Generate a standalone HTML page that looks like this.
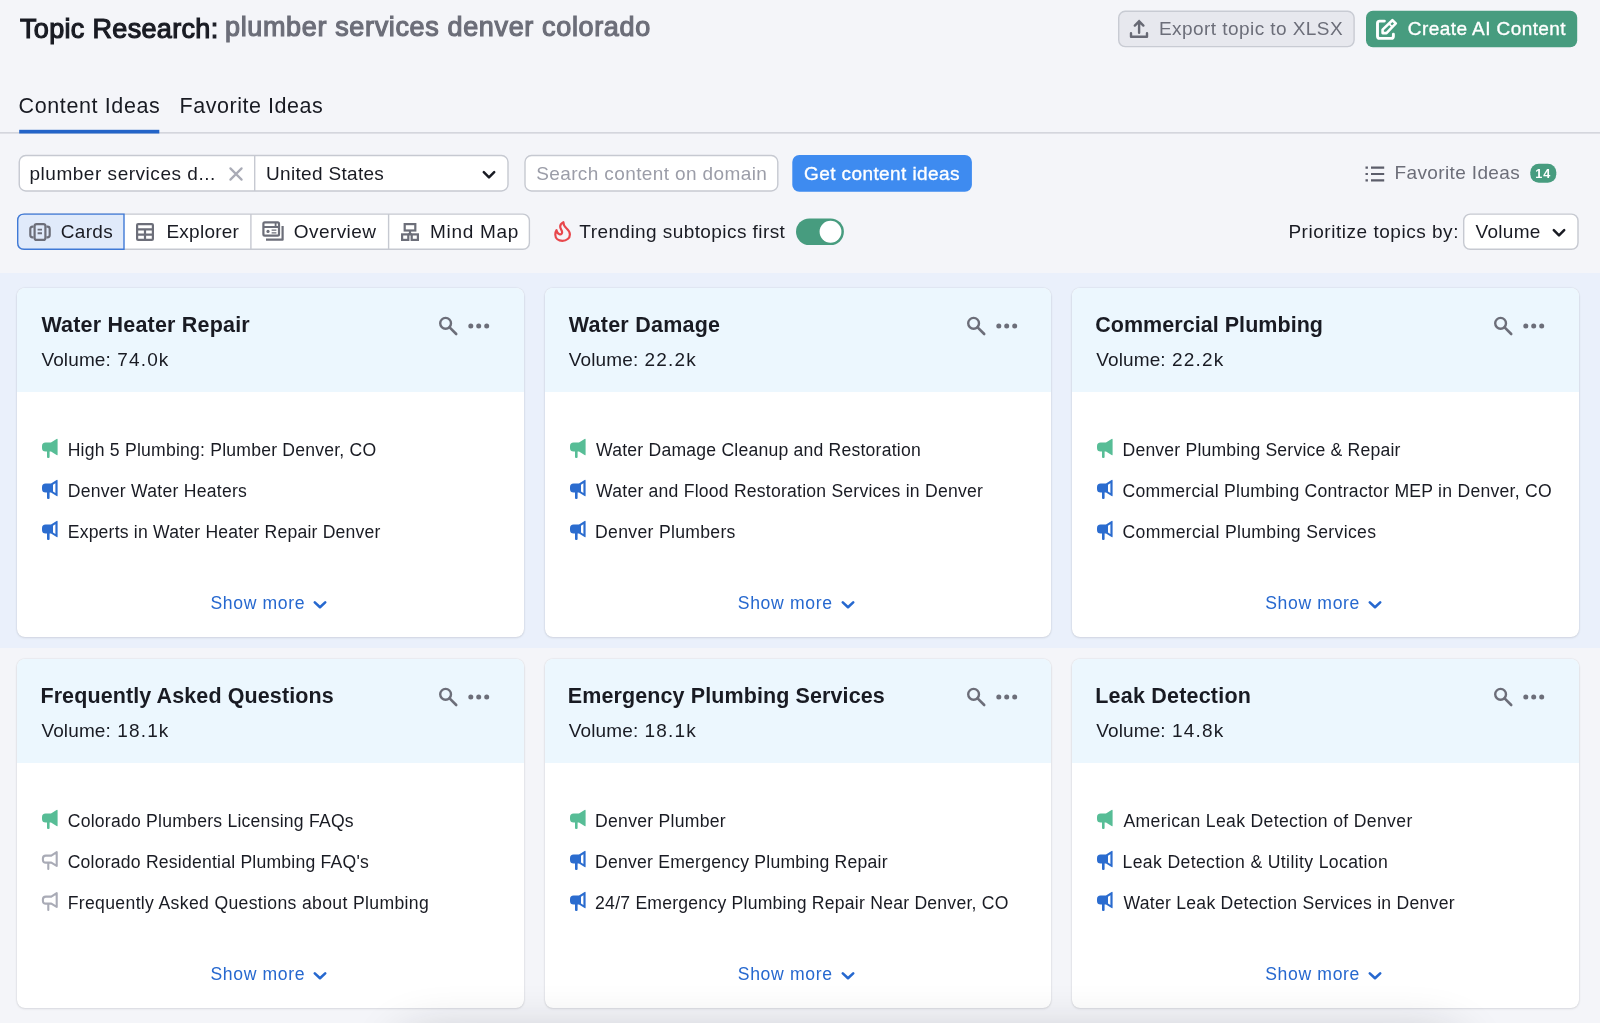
<!DOCTYPE html>
<html lang="en">
<head>
<meta charset="utf-8">
<title>Topic Research: plumber services denver colorado</title>
<style>
*{box-sizing:border-box;margin:0;padding:0}
html,body{width:1600px;height:1023px;overflow:hidden}
body{background:#f4f5f9;font-family:"Liberation Sans",Arial,sans-serif;color:#191b23;position:relative}
.t{position:absolute;white-space:pre;line-height:1}
svg{position:absolute;overflow:visible}
.a{position:absolute}
/* cards */
#band{left:0;top:273px;width:1600px;height:375px;background:#eaf0fb}
.card{position:absolute;width:506.4px;height:349.5px;background:#fff;border-radius:8px;box-shadow:0 0 1.5px rgba(25,27,35,.17),0 1px 2.5px rgba(25,27,35,.09);overflow:hidden}
.card .hd{position:absolute;left:0;top:0;width:100%;height:104.5px;background:#ecf7fe}
#txt{position:absolute;left:0;top:0;width:1600px;height:1023px;will-change:transform}
#btmshade{left:410px;top:1050px;width:1040px;height:40px;border-radius:20px;box-shadow:0 0 50px 14px rgba(25,27,35,.24);pointer-events:none}
</style>
</head>
<body>
<svg id="chrome" viewBox="0 0 1600 270" width="1600" height="270" style="left:0;top:0">
<rect x="0" y="132.1" width="1600" height="1.5" fill="#d1d3da"/>
<rect x="19.2" y="129.8" width="140.1" height="3.7" fill="#2364c8"/>
<rect x="1118.7" y="11.3" width="235.4" height="35.3" rx="6.5" fill="#e7e8ee" stroke="#c8cbd3" stroke-width="1.4"/>
<rect x="1366" y="10.7" width="211.2" height="36.6" rx="7" fill="#479c7f"/>
<rect x="19.25" y="155.5" width="488.75" height="35.5" rx="6.5" fill="#fff" stroke="#c6c9d1" stroke-width="1.4"/>
<path d="M254.7 155.5 V191" stroke="#c6c9d1" stroke-width="1.4"/>
<rect x="525" y="155.5" width="252.8" height="35.5" rx="6.5" fill="#fff" stroke="#c6c9d1" stroke-width="1.4"/>
<rect x="792.3" y="155" width="179.6" height="36.8" rx="7" fill="#3e8bf0"/>
<rect x="1530.3" y="163.8" width="26" height="19" rx="8.5" fill="#479c7f"/>
<rect x="17.7" y="214.1" width="511.7" height="35.2" rx="6.5" fill="#fff" stroke="#c6c9d1" stroke-width="1.4"/>
<path d="M250.9 214.1 V249.3 M388.6 214.1 V249.3" stroke="#c6c9d1" stroke-width="1.4"/>
<path d="M124 214.1 H24.2 Q17.7 214.1 17.7 220.6 V242.8 Q17.7 249.3 24.2 249.3 H124 Z" fill="#e0eafa" stroke="#3f79d6" stroke-width="1.4"/>
<rect x="796" y="218.4" width="47.9" height="26.7" rx="13.35" fill="#479c7f"/>
<circle cx="830.5" cy="231.75" r="10.9" fill="#fff"/>
<rect x="1463.7" y="214.1" width="114.3" height="35.2" rx="6.5" fill="#fff" stroke="#c6c9d1" stroke-width="1.4"/>
<g fill="none" stroke="#676974" stroke-width="2.4" stroke-linecap="round">
<path d="M1139.1 32.8 V22 M1134.8 25.6 L1139.1 21.3 L1143.4 25.6" stroke-linejoin="miter"/>
<path d="M1131 33.3 V36.7 H1147 V33.3" stroke-linejoin="round"/>
</g>
<g fill="none" stroke="#fff" stroke-linecap="round" stroke-linejoin="round">
<path d="M1384.4 21.1 H1379.7 Q1377.5 21.1 1377.5 23.3 V36.2 Q1377.5 38.4 1379.7 38.4 H1391.2 Q1393.4 38.4 1393.4 36.2 V34.2" stroke-width="2.9"/>
<path d="M1382.6 29.6 L1392.4 20.2 L1395.8 23.4 L1386.5 33.1 H1382.6 Z" stroke-width="2.6"/>
<path d="M1388.9 23.7 L1392 26.7" stroke-width="1.8" stroke-linecap="butt"/>
</g>
</svg>
<div class="a" id="band"></div>

<!-- clear X -->
<svg viewBox="0 0 14 14" width="14" height="14" style="left:229px;top:166.7px"><path d="M1.4 1.4 L12.6 12.6 M12.6 1.4 L1.4 12.6" stroke="#a9abb6" stroke-width="2.2" stroke-linecap="round"/></svg>
<!-- select chevron -->
<svg viewBox="0 0 14 10" width="14" height="10" style="left:481.5px;top:170px"><path d="M1.8 2.2 L7 7.4 L12.2 2.2" fill="none" stroke="#191b23" stroke-width="2.5" stroke-linecap="round" stroke-linejoin="round"/></svg>
<!-- volume chevron -->
<svg viewBox="0 0 14 10" width="14" height="10" style="left:1552.3px;top:228.3px"><path d="M1.8 2.2 L7 7.4 L12.2 2.2" fill="none" stroke="#191b23" stroke-width="2.5" stroke-linecap="round" stroke-linejoin="round"/></svg>
<!-- list icon -->
<svg viewBox="0 0 20 16" width="20" height="16" style="left:1365px;top:165.6px"><path d="M6 1.6 H19.2 M6 8 H19.2 M6 14.4 H19.2" stroke="#5c5e6b" stroke-width="2.2"/><path d="M0.5 1.6 H2.9 M0.5 8 H2.9 M0.5 14.4 H2.9" stroke="#5c5e6b" stroke-width="2.2"/></svg>
<!-- cards icon -->
<svg viewBox="0 0 22 18" width="22" height="18" style="left:28.5px;top:223px"><rect x="5.6" y="1.1" width="10.8" height="15.8" rx="2" fill="none" stroke="#6c6e79" stroke-width="2.2"/><path d="M4.6 3.7 H3.6 Q1.3 3.7 1.3 6 V12 Q1.3 14.3 3.6 14.3 H4.6 M17.4 3.7 H18.4 Q20.7 3.7 20.7 6 V12 Q20.7 14.3 18.4 14.3 H17.4" fill="none" stroke="#6c6e79" stroke-width="2.2"/><path d="M8.6 6.6 H13 M8.6 10.2 H13" stroke="#6c6e79" stroke-width="1.9"/></svg>
<!-- explorer (table) icon -->
<svg viewBox="0 0 18 18" width="18" height="18" style="left:136.2px;top:223px"><rect x="1.1" y="1.1" width="15.8" height="15.8" rx="1" fill="none" stroke="#6c6e79" stroke-width="2.2"/><path d="M1 6.3 H17 M1 11.7 H17 M9 6.3 V17" stroke="#6c6e79" stroke-width="2.2" fill="none"/></svg>
<!-- overview icon -->
<svg viewBox="0 0 22 20" width="22" height="20" style="left:261.8px;top:221px"><rect x="1.4" y="1.3" width="15.6" height="13.4" rx="1.4" fill="none" stroke="#6c6e79" stroke-width="2.2"/><path d="M1.4 6 H17 M13.6 2 V5.4" stroke="#6c6e79" stroke-width="1.8"/><circle cx="6" cy="10.4" r="1.6" fill="#6c6e79"/><path d="M9.6 9.2 H14.4 M9.6 11.8 H14.4" stroke="#6c6e79" stroke-width="1.3"/><path d="M20.6 5 V18.7 H4" fill="none" stroke="#6c6e79" stroke-width="2.2" stroke-linejoin="round"/></svg>
<!-- mind map icon -->
<svg viewBox="0 0 18 18" width="18" height="18" style="left:401px;top:223px"><rect x="3.7" y="1.1" width="10.6" height="6.4" fill="none" stroke="#6c6e79" stroke-width="2.2"/><path d="M9 7.5 V11.2" stroke="#6c6e79" stroke-width="2.2"/><rect x="1.1" y="11.4" width="6.2" height="5.5" fill="none" stroke="#6c6e79" stroke-width="2.2"/><rect x="10.7" y="11.4" width="6.2" height="5.5" fill="none" stroke="#6c6e79" stroke-width="2.2"/><path d="M7 11.4 H11" stroke="#6c6e79" stroke-width="2.2"/></svg>
<!-- flame icon -->
<svg viewBox="0 0 30 30" width="30" height="30" style="left:548px;top:216px"><path d="M15.4 6.2 C15.2 8.8 16.6 10.6 18.4 12.2 C20.4 14 21.9 15.8 21.9 18.4 C21.9 22.2 18.6 24.8 14.4 24.8 C10.4 24.8 7.3 22.4 7.3 18.8 C7.3 17 7.7 15.4 8.5 14.2 C8.9 16 9.8 17.6 11.4 18.2 C13.2 18.8 14.6 17.4 14 15.4 C13.6 14 12.4 12.6 12.2 10.8 C12 8.8 13.4 7.2 15.4 6.2 Z" fill="none" stroke="#e8474c" stroke-width="2.2" stroke-linejoin="round"/></svg>

<div class="card" style="left:17.4px;top:287.5px"><div class="hd"></div></div>
<svg class="ic" viewBox="0 0 60 24" width="60" height="24" style="left:434.4px;top:314.0px"><circle cx="11.6" cy="9.3" r="5.4" fill="none" stroke="#6c6e79" stroke-width="2.4"/><path d="M15.6 13.4 L22.2 20" stroke="#6c6e79" stroke-width="2.6" stroke-linecap="round"/><circle cx="36.8" cy="11.9" r="2.5" fill="#6c6e79"/><circle cx="44.7" cy="11.9" r="2.5" fill="#6c6e79"/><circle cx="52.7" cy="11.9" r="2.5" fill="#6c6e79"/></svg>
<svg class="mg" viewBox="0 0 18 20" width="18" height="20" style="left:41.3px;top:438.2px"><path d="M1 8.2 Q1 4.6 4.6 4.6 H10 L15.6 0.9 Q16.6 0.4 16.6 1.6 V16.4 Q16.6 17.6 15.6 17.1 L10 13.6 H8.6 V19 Q8.6 20 7.6 20 H7 Q6 20 6 19 V13.6 H4.6 Q1 13.6 1 10 Z" fill="#57bd96"/></svg>
<svg class="mg" viewBox="0 0 18 20" width="18" height="20" style="left:41.3px;top:479.2px"><path fill-rule="evenodd" d="M1 8.2 Q1 4.6 4.6 4.6 H10 L15.6 0.9 Q16.6 0.4 16.6 1.6 V16.4 Q16.6 17.6 15.6 17.1 L10 13.6 H8.6 V19 Q8.6 20 7.6 20 H7 Q6 20 6 19 V13.6 H4.6 Q1 13.6 1 10 Z M12 5.8 L14.4 4.2 V13.9 L12 12.4 Z" fill="#2b6ccf"/></svg>
<svg class="mg" viewBox="0 0 18 20" width="18" height="20" style="left:41.3px;top:520.2px"><path fill-rule="evenodd" d="M1 8.2 Q1 4.6 4.6 4.6 H10 L15.6 0.9 Q16.6 0.4 16.6 1.6 V16.4 Q16.6 17.6 15.6 17.1 L10 13.6 H8.6 V19 Q8.6 20 7.6 20 H7 Q6 20 6 19 V13.6 H4.6 Q1 13.6 1 10 Z M12 5.8 L14.4 4.2 V13.9 L12 12.4 Z" fill="#2b6ccf"/></svg>
<svg class="ic" viewBox="0 0 16 12" width="16" height="12" style="left:312.4px;top:598.5px"><path d="M2.8 3.4 L8 8.2 L13.2 3.4" fill="none" stroke="#2668cf" stroke-width="2.6" stroke-linecap="round" stroke-linejoin="round"/></svg>
<div class="card" style="left:544.8px;top:287.5px"><div class="hd"></div></div>
<svg class="ic" viewBox="0 0 60 24" width="60" height="24" style="left:961.8px;top:314.0px"><circle cx="11.6" cy="9.3" r="5.4" fill="none" stroke="#6c6e79" stroke-width="2.4"/><path d="M15.6 13.4 L22.2 20" stroke="#6c6e79" stroke-width="2.6" stroke-linecap="round"/><circle cx="36.8" cy="11.9" r="2.5" fill="#6c6e79"/><circle cx="44.7" cy="11.9" r="2.5" fill="#6c6e79"/><circle cx="52.7" cy="11.9" r="2.5" fill="#6c6e79"/></svg>
<svg class="mg" viewBox="0 0 18 20" width="18" height="20" style="left:568.7px;top:438.2px"><path d="M1 8.2 Q1 4.6 4.6 4.6 H10 L15.6 0.9 Q16.6 0.4 16.6 1.6 V16.4 Q16.6 17.6 15.6 17.1 L10 13.6 H8.6 V19 Q8.6 20 7.6 20 H7 Q6 20 6 19 V13.6 H4.6 Q1 13.6 1 10 Z" fill="#57bd96"/></svg>
<svg class="mg" viewBox="0 0 18 20" width="18" height="20" style="left:568.7px;top:479.2px"><path fill-rule="evenodd" d="M1 8.2 Q1 4.6 4.6 4.6 H10 L15.6 0.9 Q16.6 0.4 16.6 1.6 V16.4 Q16.6 17.6 15.6 17.1 L10 13.6 H8.6 V19 Q8.6 20 7.6 20 H7 Q6 20 6 19 V13.6 H4.6 Q1 13.6 1 10 Z M12 5.8 L14.4 4.2 V13.9 L12 12.4 Z" fill="#2b6ccf"/></svg>
<svg class="mg" viewBox="0 0 18 20" width="18" height="20" style="left:568.7px;top:520.2px"><path fill-rule="evenodd" d="M1 8.2 Q1 4.6 4.6 4.6 H10 L15.6 0.9 Q16.6 0.4 16.6 1.6 V16.4 Q16.6 17.6 15.6 17.1 L10 13.6 H8.6 V19 Q8.6 20 7.6 20 H7 Q6 20 6 19 V13.6 H4.6 Q1 13.6 1 10 Z M12 5.8 L14.4 4.2 V13.9 L12 12.4 Z" fill="#2b6ccf"/></svg>
<svg class="ic" viewBox="0 0 16 12" width="16" height="12" style="left:839.8px;top:598.5px"><path d="M2.8 3.4 L8 8.2 L13.2 3.4" fill="none" stroke="#2668cf" stroke-width="2.6" stroke-linecap="round" stroke-linejoin="round"/></svg>
<div class="card" style="left:1072.2px;top:287.5px"><div class="hd"></div></div>
<svg class="ic" viewBox="0 0 60 24" width="60" height="24" style="left:1489.2px;top:314.0px"><circle cx="11.6" cy="9.3" r="5.4" fill="none" stroke="#6c6e79" stroke-width="2.4"/><path d="M15.6 13.4 L22.2 20" stroke="#6c6e79" stroke-width="2.6" stroke-linecap="round"/><circle cx="36.8" cy="11.9" r="2.5" fill="#6c6e79"/><circle cx="44.7" cy="11.9" r="2.5" fill="#6c6e79"/><circle cx="52.7" cy="11.9" r="2.5" fill="#6c6e79"/></svg>
<svg class="mg" viewBox="0 0 18 20" width="18" height="20" style="left:1096.1px;top:438.2px"><path d="M1 8.2 Q1 4.6 4.6 4.6 H10 L15.6 0.9 Q16.6 0.4 16.6 1.6 V16.4 Q16.6 17.6 15.6 17.1 L10 13.6 H8.6 V19 Q8.6 20 7.6 20 H7 Q6 20 6 19 V13.6 H4.6 Q1 13.6 1 10 Z" fill="#57bd96"/></svg>
<svg class="mg" viewBox="0 0 18 20" width="18" height="20" style="left:1096.1px;top:479.2px"><path fill-rule="evenodd" d="M1 8.2 Q1 4.6 4.6 4.6 H10 L15.6 0.9 Q16.6 0.4 16.6 1.6 V16.4 Q16.6 17.6 15.6 17.1 L10 13.6 H8.6 V19 Q8.6 20 7.6 20 H7 Q6 20 6 19 V13.6 H4.6 Q1 13.6 1 10 Z M12 5.8 L14.4 4.2 V13.9 L12 12.4 Z" fill="#2b6ccf"/></svg>
<svg class="mg" viewBox="0 0 18 20" width="18" height="20" style="left:1096.1px;top:520.2px"><path fill-rule="evenodd" d="M1 8.2 Q1 4.6 4.6 4.6 H10 L15.6 0.9 Q16.6 0.4 16.6 1.6 V16.4 Q16.6 17.6 15.6 17.1 L10 13.6 H8.6 V19 Q8.6 20 7.6 20 H7 Q6 20 6 19 V13.6 H4.6 Q1 13.6 1 10 Z M12 5.8 L14.4 4.2 V13.9 L12 12.4 Z" fill="#2b6ccf"/></svg>
<svg class="ic" viewBox="0 0 16 12" width="16" height="12" style="left:1367.2px;top:598.5px"><path d="M2.8 3.4 L8 8.2 L13.2 3.4" fill="none" stroke="#2668cf" stroke-width="2.6" stroke-linecap="round" stroke-linejoin="round"/></svg>
<div class="card" style="left:17.4px;top:658.5px"><div class="hd"></div></div>
<svg class="ic" viewBox="0 0 60 24" width="60" height="24" style="left:434.4px;top:685.0px"><circle cx="11.6" cy="9.3" r="5.4" fill="none" stroke="#6c6e79" stroke-width="2.4"/><path d="M15.6 13.4 L22.2 20" stroke="#6c6e79" stroke-width="2.6" stroke-linecap="round"/><circle cx="36.8" cy="11.9" r="2.5" fill="#6c6e79"/><circle cx="44.7" cy="11.9" r="2.5" fill="#6c6e79"/><circle cx="52.7" cy="11.9" r="2.5" fill="#6c6e79"/></svg>
<svg class="mg" viewBox="0 0 18 20" width="18" height="20" style="left:41.3px;top:809.2px"><path d="M1 8.2 Q1 4.6 4.6 4.6 H10 L15.6 0.9 Q16.6 0.4 16.6 1.6 V16.4 Q16.6 17.6 15.6 17.1 L10 13.6 H8.6 V19 Q8.6 20 7.6 20 H7 Q6 20 6 19 V13.6 H4.6 Q1 13.6 1 10 Z" fill="#57bd96"/></svg>
<svg class="mg" viewBox="0 0 18 20" width="18" height="20" style="left:41.3px;top:850.2px"><path d="M1.9 8.4 Q1.9 5.6 4.8 5.6 H10.3 L15.7 2.1 V15.9 L10.3 12.6 H4.8 Q1.9 12.6 1.9 9.8 Z M7.3 13 V19" fill="none" stroke="#a9abb6" stroke-width="2.1" stroke-linejoin="round" stroke-linecap="round"/></svg>
<svg class="mg" viewBox="0 0 18 20" width="18" height="20" style="left:41.3px;top:891.2px"><path d="M1.9 8.4 Q1.9 5.6 4.8 5.6 H10.3 L15.7 2.1 V15.9 L10.3 12.6 H4.8 Q1.9 12.6 1.9 9.8 Z M7.3 13 V19" fill="none" stroke="#a9abb6" stroke-width="2.1" stroke-linejoin="round" stroke-linecap="round"/></svg>
<svg class="ic" viewBox="0 0 16 12" width="16" height="12" style="left:312.4px;top:969.5px"><path d="M2.8 3.4 L8 8.2 L13.2 3.4" fill="none" stroke="#2668cf" stroke-width="2.6" stroke-linecap="round" stroke-linejoin="round"/></svg>
<div class="card" style="left:544.8px;top:658.5px"><div class="hd"></div></div>
<svg class="ic" viewBox="0 0 60 24" width="60" height="24" style="left:961.8px;top:685.0px"><circle cx="11.6" cy="9.3" r="5.4" fill="none" stroke="#6c6e79" stroke-width="2.4"/><path d="M15.6 13.4 L22.2 20" stroke="#6c6e79" stroke-width="2.6" stroke-linecap="round"/><circle cx="36.8" cy="11.9" r="2.5" fill="#6c6e79"/><circle cx="44.7" cy="11.9" r="2.5" fill="#6c6e79"/><circle cx="52.7" cy="11.9" r="2.5" fill="#6c6e79"/></svg>
<svg class="mg" viewBox="0 0 18 20" width="18" height="20" style="left:568.7px;top:809.2px"><path d="M1 8.2 Q1 4.6 4.6 4.6 H10 L15.6 0.9 Q16.6 0.4 16.6 1.6 V16.4 Q16.6 17.6 15.6 17.1 L10 13.6 H8.6 V19 Q8.6 20 7.6 20 H7 Q6 20 6 19 V13.6 H4.6 Q1 13.6 1 10 Z" fill="#57bd96"/></svg>
<svg class="mg" viewBox="0 0 18 20" width="18" height="20" style="left:568.7px;top:850.2px"><path fill-rule="evenodd" d="M1 8.2 Q1 4.6 4.6 4.6 H10 L15.6 0.9 Q16.6 0.4 16.6 1.6 V16.4 Q16.6 17.6 15.6 17.1 L10 13.6 H8.6 V19 Q8.6 20 7.6 20 H7 Q6 20 6 19 V13.6 H4.6 Q1 13.6 1 10 Z M12 5.8 L14.4 4.2 V13.9 L12 12.4 Z" fill="#2b6ccf"/></svg>
<svg class="mg" viewBox="0 0 18 20" width="18" height="20" style="left:568.7px;top:891.2px"><path fill-rule="evenodd" d="M1 8.2 Q1 4.6 4.6 4.6 H10 L15.6 0.9 Q16.6 0.4 16.6 1.6 V16.4 Q16.6 17.6 15.6 17.1 L10 13.6 H8.6 V19 Q8.6 20 7.6 20 H7 Q6 20 6 19 V13.6 H4.6 Q1 13.6 1 10 Z M12 5.8 L14.4 4.2 V13.9 L12 12.4 Z" fill="#2b6ccf"/></svg>
<svg class="ic" viewBox="0 0 16 12" width="16" height="12" style="left:839.8px;top:969.5px"><path d="M2.8 3.4 L8 8.2 L13.2 3.4" fill="none" stroke="#2668cf" stroke-width="2.6" stroke-linecap="round" stroke-linejoin="round"/></svg>
<div class="card" style="left:1072.2px;top:658.5px"><div class="hd"></div></div>
<svg class="ic" viewBox="0 0 60 24" width="60" height="24" style="left:1489.2px;top:685.0px"><circle cx="11.6" cy="9.3" r="5.4" fill="none" stroke="#6c6e79" stroke-width="2.4"/><path d="M15.6 13.4 L22.2 20" stroke="#6c6e79" stroke-width="2.6" stroke-linecap="round"/><circle cx="36.8" cy="11.9" r="2.5" fill="#6c6e79"/><circle cx="44.7" cy="11.9" r="2.5" fill="#6c6e79"/><circle cx="52.7" cy="11.9" r="2.5" fill="#6c6e79"/></svg>
<svg class="mg" viewBox="0 0 18 20" width="18" height="20" style="left:1096.1px;top:809.2px"><path d="M1 8.2 Q1 4.6 4.6 4.6 H10 L15.6 0.9 Q16.6 0.4 16.6 1.6 V16.4 Q16.6 17.6 15.6 17.1 L10 13.6 H8.6 V19 Q8.6 20 7.6 20 H7 Q6 20 6 19 V13.6 H4.6 Q1 13.6 1 10 Z" fill="#57bd96"/></svg>
<svg class="mg" viewBox="0 0 18 20" width="18" height="20" style="left:1096.1px;top:850.2px"><path fill-rule="evenodd" d="M1 8.2 Q1 4.6 4.6 4.6 H10 L15.6 0.9 Q16.6 0.4 16.6 1.6 V16.4 Q16.6 17.6 15.6 17.1 L10 13.6 H8.6 V19 Q8.6 20 7.6 20 H7 Q6 20 6 19 V13.6 H4.6 Q1 13.6 1 10 Z M12 5.8 L14.4 4.2 V13.9 L12 12.4 Z" fill="#2b6ccf"/></svg>
<svg class="mg" viewBox="0 0 18 20" width="18" height="20" style="left:1096.1px;top:891.2px"><path fill-rule="evenodd" d="M1 8.2 Q1 4.6 4.6 4.6 H10 L15.6 0.9 Q16.6 0.4 16.6 1.6 V16.4 Q16.6 17.6 15.6 17.1 L10 13.6 H8.6 V19 Q8.6 20 7.6 20 H7 Q6 20 6 19 V13.6 H4.6 Q1 13.6 1 10 Z M12 5.8 L14.4 4.2 V13.9 L12 12.4 Z" fill="#2b6ccf"/></svg>
<svg class="ic" viewBox="0 0 16 12" width="16" height="12" style="left:1367.2px;top:969.5px"><path d="M2.8 3.4 L8 8.2 L13.2 3.4" fill="none" stroke="#2668cf" stroke-width="2.6" stroke-linecap="round" stroke-linejoin="round"/></svg>
<div id="txt">
<div class="t" style="left:20.0px;top:16px;font-size:27px;color:#191b23;letter-spacing:0.329px;-webkit-text-stroke:1.15px #191b23;">Topic Research:</div>
<div class="t" style="left:225.0px;top:14px;font-size:27px;color:#6c6e79;letter-spacing:0.645px;-webkit-text-stroke:1.15px #6c6e79;">plumber services denver colorado</div>
<div class="t" style="left:1159.0px;top:19px;font-size:19px;color:#6c6e79;letter-spacing:0.437px;">Export topic to XLSX</div>
<div class="t" style="left:1407.8px;top:19px;font-size:19px;color:#ffffff;letter-spacing:0.425px;-webkit-text-stroke:0.35px #fff;">Create AI Content</div>
<div class="t" style="left:18.5px;top:96px;font-size:21.5px;color:#191b23;letter-spacing:0.625px;">Content Ideas</div>
<div class="t" style="left:179.5px;top:96px;font-size:21.5px;color:#191b23;letter-spacing:0.538px;">Favorite Ideas</div>
<div class="t" style="left:29.5px;top:164px;font-size:19px;color:#191b23;letter-spacing:0.525px;">plumber services d...</div>
<div class="t" style="left:266.0px;top:164px;font-size:19px;color:#191b23;letter-spacing:0.317px;">United States</div>
<div class="t" style="left:536.2px;top:164px;font-size:19px;color:#9b9da8;letter-spacing:0.383px;">Search content on domain</div>
<div class="t" style="left:804.0px;top:164px;font-size:19px;color:#ffffff;letter-spacing:0.406px;-webkit-text-stroke:0.35px #fff;">Get content ideas</div>
<div class="t" style="left:1394.5px;top:163px;font-size:19px;color:#6c6e79;letter-spacing:0.369px;">Favorite Ideas</div>
<div class="t" style="left:1535.3px;top:168px;font-size:12.6px;color:#ffffff;letter-spacing:1.000px;font-weight:700;">14</div>
<div class="t" style="left:60.8px;top:222px;font-size:19px;color:#191b23;letter-spacing:0.300px;">Cards</div>
<div class="t" style="left:166.4px;top:222px;font-size:19px;color:#191b23;letter-spacing:0.257px;">Explorer</div>
<div class="t" style="left:293.8px;top:222px;font-size:19px;color:#191b23;letter-spacing:0.429px;">Overview</div>
<div class="t" style="left:430.0px;top:222px;font-size:19px;color:#191b23;letter-spacing:0.686px;">Mind Map</div>
<div class="t" style="left:579.3px;top:222px;font-size:19px;color:#191b23;letter-spacing:0.430px;">Trending subtopics first</div>
<div class="t" style="left:1288.4px;top:222px;font-size:19px;color:#191b23;letter-spacing:0.530px;">Prioritize topics by:</div>
<div class="t" style="left:1475.6px;top:222px;font-size:19px;color:#191b23;letter-spacing:0.280px;">Volume</div>
<div class="t" style="left:41.4px;top:315px;font-size:21.5px;color:#191b23;letter-spacing:0.200px;font-weight:700;">Water Heater Repair</div>
<div class="t" style="left:41.4px;top:350px;font-size:19px;color:#191b23;letter-spacing:0.133px;">Volume:</div>
<div class="t" style="left:117.2px;top:350px;font-size:19px;color:#191b23;letter-spacing:1.175px;">74.0k</div>
<div class="t" style="left:67.7px;top:442px;font-size:17.6px;color:#191b23;letter-spacing:0.215px;">High 5 Plumbing: Plumber Denver, CO</div>
<div class="t" style="left:67.7px;top:483px;font-size:17.6px;color:#191b23;letter-spacing:0.253px;">Denver Water Heaters</div>
<div class="t" style="left:67.7px;top:524px;font-size:17.6px;color:#191b23;letter-spacing:0.203px;">Experts in Water Heater Repair Denver</div>
<div class="t" style="left:210.4px;top:595px;font-size:17.6px;color:#2668cf;letter-spacing:0.650px;">Show more</div>
<div class="t" style="left:568.8px;top:315px;font-size:21.5px;color:#191b23;letter-spacing:0.245px;font-weight:700;">Water Damage</div>
<div class="t" style="left:568.8px;top:350px;font-size:19px;color:#191b23;letter-spacing:0.133px;">Volume:</div>
<div class="t" style="left:644.6px;top:350px;font-size:19px;color:#191b23;letter-spacing:1.175px;">22.2k</div>
<div class="t" style="left:596.1px;top:442px;font-size:17.6px;color:#191b23;letter-spacing:0.211px;">Water Damage Cleanup and Restoration</div>
<div class="t" style="left:596.1px;top:483px;font-size:17.6px;color:#191b23;letter-spacing:0.220px;">Water and Flood Restoration Services in Denver</div>
<div class="t" style="left:595.1px;top:524px;font-size:17.6px;color:#191b23;letter-spacing:0.314px;">Denver Plumbers</div>
<div class="t" style="left:737.8px;top:595px;font-size:17.6px;color:#2668cf;letter-spacing:0.650px;">Show more</div>
<div class="t" style="left:1095.2px;top:315px;font-size:21.5px;color:#191b23;letter-spacing:0.044px;font-weight:700;">Commercial Plumbing</div>
<div class="t" style="left:1096.2px;top:350px;font-size:19px;color:#191b23;letter-spacing:0.133px;">Volume:</div>
<div class="t" style="left:1172.0px;top:350px;font-size:19px;color:#191b23;letter-spacing:1.175px;">22.2k</div>
<div class="t" style="left:1122.5px;top:442px;font-size:17.6px;color:#191b23;letter-spacing:0.194px;">Denver Plumbing Service &amp; Repair</div>
<div class="t" style="left:1122.5px;top:483px;font-size:17.6px;color:#191b23;letter-spacing:0.255px;">Commercial Plumbing Contractor MEP in Denver, CO</div>
<div class="t" style="left:1122.5px;top:524px;font-size:17.6px;color:#191b23;letter-spacing:0.333px;">Commercial Plumbing Services</div>
<div class="t" style="left:1265.2px;top:595px;font-size:17.6px;color:#2668cf;letter-spacing:0.650px;">Show more</div>
<div class="t" style="left:40.4px;top:686px;font-size:21.5px;color:#191b23;letter-spacing:0.104px;font-weight:700;">Frequently Asked Questions</div>
<div class="t" style="left:41.4px;top:721px;font-size:19px;color:#191b23;letter-spacing:0.133px;">Volume:</div>
<div class="t" style="left:117.2px;top:721px;font-size:19px;color:#191b23;letter-spacing:1.175px;">18.1k</div>
<div class="t" style="left:67.7px;top:813px;font-size:17.6px;color:#191b23;letter-spacing:0.235px;">Colorado Plumbers Licensing FAQs</div>
<div class="t" style="left:67.7px;top:854px;font-size:17.6px;color:#191b23;letter-spacing:0.215px;">Colorado Residential Plumbing FAQ's</div>
<div class="t" style="left:67.7px;top:895px;font-size:17.6px;color:#191b23;letter-spacing:0.345px;">Frequently Asked Questions about Plumbing</div>
<div class="t" style="left:210.4px;top:966px;font-size:17.6px;color:#2668cf;letter-spacing:0.650px;">Show more</div>
<div class="t" style="left:567.8px;top:686px;font-size:21.5px;color:#191b23;letter-spacing:0.104px;font-weight:700;">Emergency Plumbing Services</div>
<div class="t" style="left:568.8px;top:721px;font-size:19px;color:#191b23;letter-spacing:0.133px;">Volume:</div>
<div class="t" style="left:644.6px;top:721px;font-size:19px;color:#191b23;letter-spacing:1.175px;">18.1k</div>
<div class="t" style="left:595.1px;top:813px;font-size:17.6px;color:#191b23;letter-spacing:0.262px;">Denver Plumber</div>
<div class="t" style="left:595.1px;top:854px;font-size:17.6px;color:#191b23;letter-spacing:0.223px;">Denver Emergency Plumbing Repair</div>
<div class="t" style="left:595.1px;top:895px;font-size:17.6px;color:#191b23;letter-spacing:0.231px;">24/7 Emergency Plumbing Repair Near Denver, CO</div>
<div class="t" style="left:737.8px;top:966px;font-size:17.6px;color:#2668cf;letter-spacing:0.650px;">Show more</div>
<div class="t" style="left:1095.2px;top:686px;font-size:21.5px;color:#191b23;letter-spacing:0.215px;font-weight:700;">Leak Detection</div>
<div class="t" style="left:1096.2px;top:721px;font-size:19px;color:#191b23;letter-spacing:0.133px;">Volume:</div>
<div class="t" style="left:1172.0px;top:721px;font-size:19px;color:#191b23;letter-spacing:1.175px;">14.8k</div>
<div class="t" style="left:1123.5px;top:813px;font-size:17.6px;color:#191b23;letter-spacing:0.344px;">American Leak Detection of Denver</div>
<div class="t" style="left:1122.5px;top:854px;font-size:17.6px;color:#191b23;letter-spacing:0.375px;">Leak Detection &amp; Utility Location</div>
<div class="t" style="left:1123.5px;top:895px;font-size:17.6px;color:#191b23;letter-spacing:0.263px;">Water Leak Detection Services in Denver</div>
<div class="t" style="left:1265.2px;top:966px;font-size:17.6px;color:#2668cf;letter-spacing:0.650px;">Show more</div>
</div>
<div class="a" id="btmshade"></div>
</body>
</html>
